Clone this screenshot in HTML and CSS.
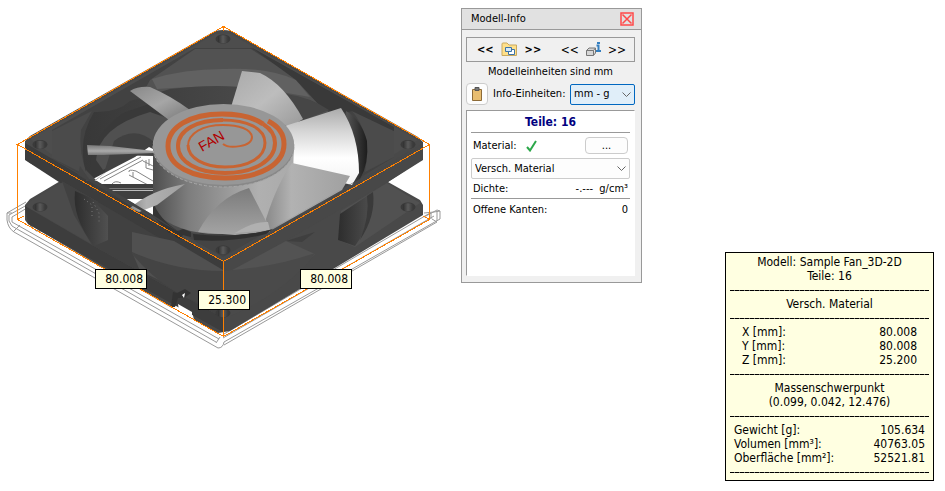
FILE: index.html
```html
<!DOCTYPE html>
<html lang="de">
<head>
<meta charset="utf-8">
<title>Modell-Info</title>
<link rel="stylesheet" href="styles.css">
</head>
<body>
<main class="workspace">
  <section class="model" aria-label="3D-Modell">
    <svg class="drawing" viewBox="0 0 445 360" width="445" height="360">
      <defs>
        <linearGradient id="hub"><stop offset="0" stop-color="#4e4e4e"/><stop offset=".25" stop-color="#7d7d7d"/><stop offset=".75" stop-color="#b0b0b0"/><stop offset="1" stop-color="#aaa"/></linearGradient>
        <linearGradient id="bladeA" x2="1" y2="1"><stop offset="0" stop-color="#888"/><stop offset=".5" stop-color="#a6a6a6"/><stop offset="1" stop-color="#777"/></linearGradient>
        <linearGradient id="bladeB" x2="1" y2="1"><stop offset="0" stop-color="#aaa"/><stop offset=".5" stop-color="#bdbdbd"/><stop offset="1" stop-color="#999"/></linearGradient>
        <linearGradient id="bladeC" x2="0" y2="1"><stop offset="0" stop-color="#aaa"/><stop offset=".3" stop-color="#d5d5d5"/><stop offset=".65" stop-color="#fff"/><stop offset="1" stop-color="#f2f2f2"/></linearGradient>
        <linearGradient id="bladeD"><stop offset="0" stop-color="#8a8a8a"/><stop offset=".3" stop-color="#b2b2b2"/><stop offset="1" stop-color="#a0a0a0"/></linearGradient>
        <linearGradient id="bladeE" x2="0" y2="1"><stop offset="0" stop-color="#7b7b7b"/><stop offset="1" stop-color="#a4a4a4"/></linearGradient>
        <linearGradient id="bladeG" x2="0" y2="1"><stop offset="0" stop-color="#777"/><stop offset=".6" stop-color="#aaa"/><stop offset="1" stop-color="#777"/></linearGradient>
        <linearGradient id="wall"><stop offset="0" stop-color="#383838"/><stop offset="1" stop-color="#525252"/></linearGradient>
        <linearGradient id="shade"><stop offset="0" stop-color="#555"/><stop offset="1" stop-color="#1c1c1c"/></linearGradient>
        <linearGradient id="recess"><stop offset="0" stop-color="#2d2d2d"/><stop offset="1" stop-color="#505050"/></linearGradient>
        <linearGradient id="bore"><stop offset="0" stop-color="#303030"/><stop offset=".5" stop-color="#5a5a5a"/><stop offset="1" stop-color="#3a3a3a"/></linearGradient>
        <g id="hole"><ellipse rx="7.500" ry="4.500" fill="#3a3a3a"/><path d="M-5 -2.500Q0 -5 5 -2.500V3Q0 5.500 -5 3Z" fill="url(#bore)"/></g>
      </defs>

      <!-- finger guard wireframe -->
      <g fill="none" stroke="#999">
        <path d="M26 202 7 213V220Q8 228 14 232L218 348M27 205 9 215V221Q11 227 17 229L216 342M27 208 12 217V222L219 339M7 213H12M13 232 20 225M30 225 36 231H42"/>
        <path d="M218 348Q223 348 224 342L440 219V211L437 210 424 217M216 343 220 337M223 338 434 216M224 334 430 213M224 345 437 222 432 219M424 213 434 212 440 211M431 213V219M437 211V221"/>
      </g>

      <!-- housing -->
      <path fill="#494949" d="M25 141 30 136 215 31Q223 29 231 31L418 137 423 142V159L388 182 420 200 423 205V215L230 331 218 333 194 320 192 311 178 304 172 308 28 224 25 220V205L30 199 62 180 30 163 25 159Z"/>
      <path fill="#4d4d4d" d="M30 139 215 34H231L418 140 388 158 223 252 195 240 85 178Z"/>
      <path fill="#3c3c3c" d="M25 143 85 178 223 262V277L62 184 25 160Z"/>
      <path fill="#484848" d="M423 143 223 262V277L388 182 423 160Z"/>

      <!-- inlet and inner walls -->
      <path fill="#424242" d="M52 130 195 48H252L394 128V157L340 190 223 245 90 180 52 158Z"/>
      <path fill="#4b4b4b" d="M52 131 92 111 81 130Q78 152 88 176L52 158Z"/>
      <path fill="#4b4b4b" d="M352 111 394 131V157L365 172Q372 134 352 111Z"/>
      <path fill="#525252" d="M195 49H251L302 82Q313 95 325 108L285 112 230 105 130 110Q144 92 150 80Z"/>
      <path fill="#616161" d="M152 79Q183 69 223 69 268 67 296 80L310 97 264 89Q220 84 157 89Z"/>
      <path fill="url(#wall)" d="M88 178Q75 143 94 112 117 113 130 101L170 89Q228 82 266 91L328 111 340 170 230 229 110 188Z"/>
      <path fill="#393939" d="M90 177Q87 139 123 113L155 102 164 125Q120 126 98 177Z"/>
      <path fill="#505050" d="M96 160Q98 127 150 112L170 119 155 144 103 170Z"/>
      <path fill="#414141" d="M114 141Q135 125 154 142V160L104 173Z"/>
      <path fill="#393939" d="M251 47 394 127V131L352 111Q333 116 319 105L296 80Z"/>
      <path fill="#464646" d="M286 94Q310 97 329 110L303 120Z"/>
      <path fill="url(#shade)" d="M346 111Q361 119 367 141 369 164 360 179L350 185Z"/>

      <!-- view through the housing -->
      <path fill="#fff" d="M91 180 135 157 149 147 155 150V216L141 208 96 181Z"/>
      <g fill="none" stroke="#858585">
        <path d="M100 179 141 157M104 181 143 160M129 172Q128 169 136 171L153 181M129 175 150 186M133 172V177M146 160V168L153 170M149 159V166M112 184Q115 180 121 183M143 161 153 166"/>
      </g>
      <path fill="#3f3f3f" d="M94 184H154V199H120L93 191Z"/><path stroke="#bcbcbc" d="M106 190.500H154"/><path stroke="#777" d="M106 188.500H154"/>
      <path fill="#4a4a4a" d="M86 170 96 180 109 170 94 181H86Z"/>

      <!-- rotor -->
      <path fill="url(#bladeG)" d="M87 145 110 146 154 151V155L88 155Z"/>
      <path fill="#444" d="M104 155 154 153V156Z"/>
      <path fill="url(#bladeA)" d="M130 91Q138 86 150 87 171 96 190 110L184 120H169Z"/>
      <path fill="url(#bladeB)" d="M242 71 260 73Q284 84 303 119L290 127 231 107Z"/>
      <path fill="url(#bladeC)" d="M285 126 341 108Q359 135 359 173L352 185 290 170Z"/>
      <path fill="url(#hub)" d="M153 145V211Q178 235 222 234 267 232 292 204L294 145Z"/>
      <path fill="#343434" d="M153 202Q159 219 179 232L169 233 153 216Z"/>
      <path fill="url(#bladeD)" d="M292 163 350 176 342 190 268 232 266 219Q277 184 292 163Z"/>
      <path fill="url(#bladeE)" d="M198 232Q216 198 249 188L268 225 270 232 235 235Z"/>
      <path fill="#b0b0b0" d="M235 233Q254 221 268 222L270 230Z"/>
      <path fill="url(#bladeD)" d="M130 208Q151 190 185 184L157 205 139 212Z"/>
      <ellipse cx="223.500" cy="147" rx="70.500" ry="40" fill="#888" stroke="#a8a8a8" stroke-dasharray="3 2"/>
      <ellipse cx="223.500" cy="144.500" rx="70.500" ry="40.500" fill="#979797"/>
      <g fill="none" stroke="#c86432">
        <path stroke-width="2" d="M223 144C229 149 252 147 252 137 251 129 239 125 223 125 203 125 188 133 188 146"/>
        <path stroke-width="3" d="M188 145C188 158 204 167 225 167 249 167 265 157 265 143 265 128 247 120 222 120"/>
        <path stroke-width="4" d="M223 120C197 120 178 130 178 146 178 162 198 173 225 173 255 173 275 160 275 143 275 135 271 129 263 124"/>
        <path stroke-width="3" d="M263 124C252 117 240 114 222 114"/>
        <path stroke-width="5" d="M263 124C252 116 239 114 222 114 190 114 168 127 168 146 168 166 192 178 225 178 261 178 284 164 284 144 284 134 278 126 268 121"/>
      </g>
      <text class="engraving" transform="translate(202 152) rotate(-30)">FAN</text>

      <!-- front plate rim -->
      <path fill="#444" d="M80 166 89 179 97 181 153 215 179 232 182 229 192 233 204 235Q245 237 270 230L340 190 357 181 368 174 389 162 223 257 78 175Z"/>
      <path fill="#303030" d="M193 234Q238 239 273 229L266 234Q230 243 194 240Z"/>
      <path fill="#333" d="M175 232 183 229 191 232V237L183 235 180 239 175 237Z"/>

      <!-- lower housing -->
      <path fill="#4b4b4b" d="M29 202 63 182 98 202 92 244 27 207Z"/>
      <path fill="#3d3d3d" d="M25 206 92 245 223 318V332L28 224Z"/>
      <path fill="#414141" d="M62 181 223 275V318L92 245 74 215Z"/>
      <path fill="url(#recess)" d="M75 191 91 198 108 216V240L94 246Q72 218 75 191Z"/>
      <path fill="#505050" d="M132 232 174 241 223 270V310L140 271 132 252Z"/>
      <path fill="#444" d="M132 252Q175 271 223 271V310Q171 300 132 254Z"/>
      <path fill="#515151" d="M387 183 420 203 355 247 338 240 341 211Z"/>
      <path fill="url(#recess)" d="M340 214 373 192Q376 216 355 246L338 240Z"/>
      <path fill="#3a3a3a" d="M367 196 373 192Q376 216 360 240Q370 216 367 196Z"/>
      <path fill="#535353" d="M223 275 286 241 315 254Q280 294 223 316Z"/>
      <path fill="#4a4a4a" d="M223 271Q276 267 315 253L308 263Q273 300 223 319Z"/>
      <path fill="#3f3f3f" d="M286 241 315 232 302 242Z"/>
      <path fill="#333" d="M177 293 185 289 191 293 184 298H178L175 307 171 307 173 292Z"/>
      <path fill="#fff" d="M178 304 192 312V320L179 311Z"/><path fill="#fff" d="M182 295 185 293 184 298Z"/>
      <use href="#hole" x="223" y="39"/><use href="#hole" x="40" y="144.500"/><use href="#hole" x="408" y="144.500"/><use href="#hole" x="40" y="207"/><use href="#hole" x="408" y="207"/><use href="#hole" x="223" y="250"/><use href="#hole" x="223" y="313"/>
      <path fill="none" stroke="#777" stroke-dasharray="1 3" d="M84 199 92 205V216M93 202 99 213V224"/>

      <!-- bounding box -->
      <path fill="none" stroke="#ff8000" shape-rendering="crispEdges" d="M17.500 144.500 223.500 26.500 429.500 144.500 223.500 261.500ZM17.500 144.500V219.500L223.500 336.500 429.500 219.500V144.500M223.500 261.500V336.500M223.500 26.500V31M17.500 219.500 24 216M429.500 219.500 423 216"/>
    </svg>
    <span class="dimension dimension-left">80.008</span>
    <span class="dimension dimension-height">25.300</span>
    <span class="dimension dimension-right">80.008</span>
  </section>

  <section class="panel" aria-labelledby="panel-title">
    <header class="panel-header">
      <h1 id="panel-title" class="panel-title">Modell-Info</h1>
      <button class="close" aria-label="Schließen"><svg width="14" height="14" viewBox="0 0 14 14"><path d="M1 1h12v12H1zM2.500 2.500l9 9M11.500 2.500l-9 9" fill="none" stroke="#ff4a4a" stroke-width="1.500"/></svg></button>
    </header>
    <div class="panel-body">
      <nav class="toolbar">
        <div class="group">
          <button class="tool strong">&lt;&lt;</button>
          <button class="tool" aria-label="Baugruppe"><svg width="17" height="15" viewBox="0 0 17 15"><path d="M1 13.500V2Q1 1 2 1H6L8 3H15.500V13.500Z" fill="#ffe08a" stroke="#c9a95e"/><path d="M7.500 7.500H13.500V12.500H7.500Z" fill="#fff" stroke="#3c74a8"/><path d="M4.500 5.500H10.500V9.500H4.500Z" fill="#d5e8f7" stroke="#3c74a8"/></svg></button>
          <button class="tool strong">&gt;&gt;</button>
        </div>
        <div class="group">
          <button class="tool">&lt;&lt;</button>
          <button class="tool" aria-label="Teil"><svg width="15" height="15" viewBox="0 0 15 15"><path d="M.5 8.500H7.500V13.500H.5ZM.5 8.500 3 6H9.500L7.500 8.500M9.500 6V11L7.500 13.500" fill="#d6d6d6" stroke="#777"/><path d="M10.500 3.500H12.500V9M10 9H15" fill="none" stroke="#347fc0" stroke-width="2"/><path d="M11 0H14V2H11Z" fill="#347fc0"/></svg></button>
          <button class="tool">&gt;&gt;</button>
        </div>
      </nav>
      <p class="units-note">Modelleinheiten sind mm</p>
      <div class="units">
        <button class="copy" aria-label="Kopieren"><svg width="10" height="14" viewBox="0 0 10 14"><path d="M.5 2.500H9.500V13.500H.5Z" fill="#e8bd70" stroke="#8d6b38"/><path d="M3 .5H7V3.500H3Z" fill="#777" stroke="#555"/></svg></button>
        <label for="units">Info-Einheiten:</label>
        <span class="drop drop-units"><select id="units"><option>mm - g</option></select><svg class="arrow" width="9" height="6" viewBox="0 0 9 6"><path d="M.5.500 4.500 4.500 8.500.500" fill="none" stroke="#666"/></svg></span>
      </div>
      <div class="parts">
        <h2 class="parts-title">Teile: 16</h2>
        <div class="row material"><label for="material">Material:</label><svg width="11" height="12" viewBox="0 0 11 12"><path d="M1 7 4 10.500 10 1" fill="none" stroke="#2ca84a" stroke-width="2"/></svg><button class="more">...</button></div>
        <span class="drop drop-material"><select id="material"><option>Versch. Material</option></select><svg class="arrow" width="9" height="6" viewBox="0 0 9 6"><path d="M.5.500 4.500 4.500 8.500.500" fill="none" stroke="#666"/></svg></span>
        <div class="row density"><span>Dichte:</span><span>-.--- &nbsp;g/cm³</span></div>
        <div class="row edges"><span>Offene Kanten:</span><span>0</span></div>
      </div>
    </div>
  </section>

  <aside class="summary">
    <p>Modell: Sample Fan_3D-2D</p>
    <p>Teile: 16</p>
    <hr>
    <p>Versch. Material</p>
    <hr>
    <table class="size">
      <tr><th>X [mm]:</th><td>80.008</td></tr>
      <tr><th>Y [mm]:</th><td>80.008</td></tr>
      <tr><th>Z [mm]:</th><td>25.200</td></tr>
    </table>
    <hr>
    <p>Massenschwerpunkt</p>
    <p>(0.099, 0.042, 12.476)</p>
    <hr>
    <table>
      <tr><th>Gewicht [g]:</th><td>105.634</td></tr>
      <tr><th>Volumen [mm³]:</th><td>40763.05</td></tr>
      <tr><th>Oberfläche [mm²]:</th><td>52521.81</td></tr>
    </table>
    <hr>
  </aside>
</main>
</body>
</html>
```
FILE: styles.css
```css
* { box-sizing: border-box; }
body { margin: 0; background: #fff; color: #000; font: 12px/14px "DejaVu Sans Condensed", "Noto Sans", sans-serif; }
h1, h2, p { margin: 0; font-size: inherit; font-weight: normal; }
button, select { font: inherit; color: inherit; }
button { display: flex; align-items: center; justify-content: center; padding: 0; border: 0; background: none; }
.workspace { display: flex; align-items: flex-start; min-height: 100vh; padding: 0 11px 10px 0; }
.model { position: relative; flex: none; }
.drawing { display: block; }
.engraving { font: 14px "Liberation Sans", sans-serif; fill: #b00000; }
.dimension { position: absolute; width: 52px; padding: 2px 3px 2px 0; border: 1px solid #000; background: #ffffe1; text-align: right; }
.dimension-left { left: 95px; top: 269px; }
.dimension-height { left: 198px; top: 290px; }
.dimension-right { left: 300px; top: 269px; }

.panel { flex: none; width: 181px; margin: 8px 0 0 16px; border: 1px solid #999; background: #f0f0f0; font-size: 11px; }
.panel-header { display: flex; align-items: center; justify-content: space-between; height: 21px; padding: 0 7px 0 9px; border-bottom: 1px solid #999; background: #e1e1e1; }
.panel-body { padding: 7px 6px 6px 4px; }
.toolbar { display: flex; align-items: center; justify-content: space-between; height: 25px; padding: 0 8px 0 10px; border: 1px solid #999; font-size: 12px; }
.group { display: flex; align-items: center; gap: 7px; }
.strong { font-size: 11px; font-weight: bold; }
.units-note { margin-top: 3px; text-align: center; }
.units { display: flex; align-items: center; margin-top: 4px; }
.copy { width: 22px; height: 22px; margin-right: 5px; border: 1px solid #ccc; border-radius: 4px; background: #fdfdfd; }
.drop { position: relative; display: block; }
.drop select { display: block; width: 100%; height: 21px; padding: 0 3px; border: 1px solid #ccc; border-radius: 2px; background: #fdfdfd; appearance: none; }
.arrow { position: absolute; right: 4px; top: 8px; pointer-events: none; }
.drop-units { width: 65px; margin-left: auto; }
.drop-units select { border-color: #0067c0; background: #e0eef9; }
.parts { min-height: 166px; margin-top: 5px; padding: 3px 4px 0; border: 1px solid #999; border-right-color: #fff; border-bottom-color: #fff; background: #fff; }
.parts-title { padding: 1px 0 2px; border-bottom: 1px solid #999; color: #000080; font-size: 12px; line-height: 15px; font-weight: bold; text-align: center; }
.row { display: flex; align-items: center; justify-content: space-between; padding: 0 2px; }
.material { height: 25px; gap: 9px; justify-content: flex-start; }
.more { width: 43px; height: 17px; margin-left: auto; border: 1px solid #ccc; border-radius: 4px; background: #fdfdfd; }
.density { height: 20px; border-bottom: 1px solid #999; }
.edges { height: 21px; }

.summary { width: 209px; margin-left: auto; align-self: flex-end; padding: 2px 4px 1px; border: 1px solid #000; background: #ffffe1; text-align: center; }
.summary hr { height: 14px; margin: 0; border: 0; background: repeating-linear-gradient(90deg, #000 0 4px, #777 4px 5px) center / 100% 1px no-repeat; }
.summary table { width: 100%; padding: 0 4px; border-spacing: 0; }
.summary .size { padding: 0 12px; }
.summary th, .summary td { padding: 0; font-weight: normal; text-align: left; }
.summary td { text-align: right; }
```
